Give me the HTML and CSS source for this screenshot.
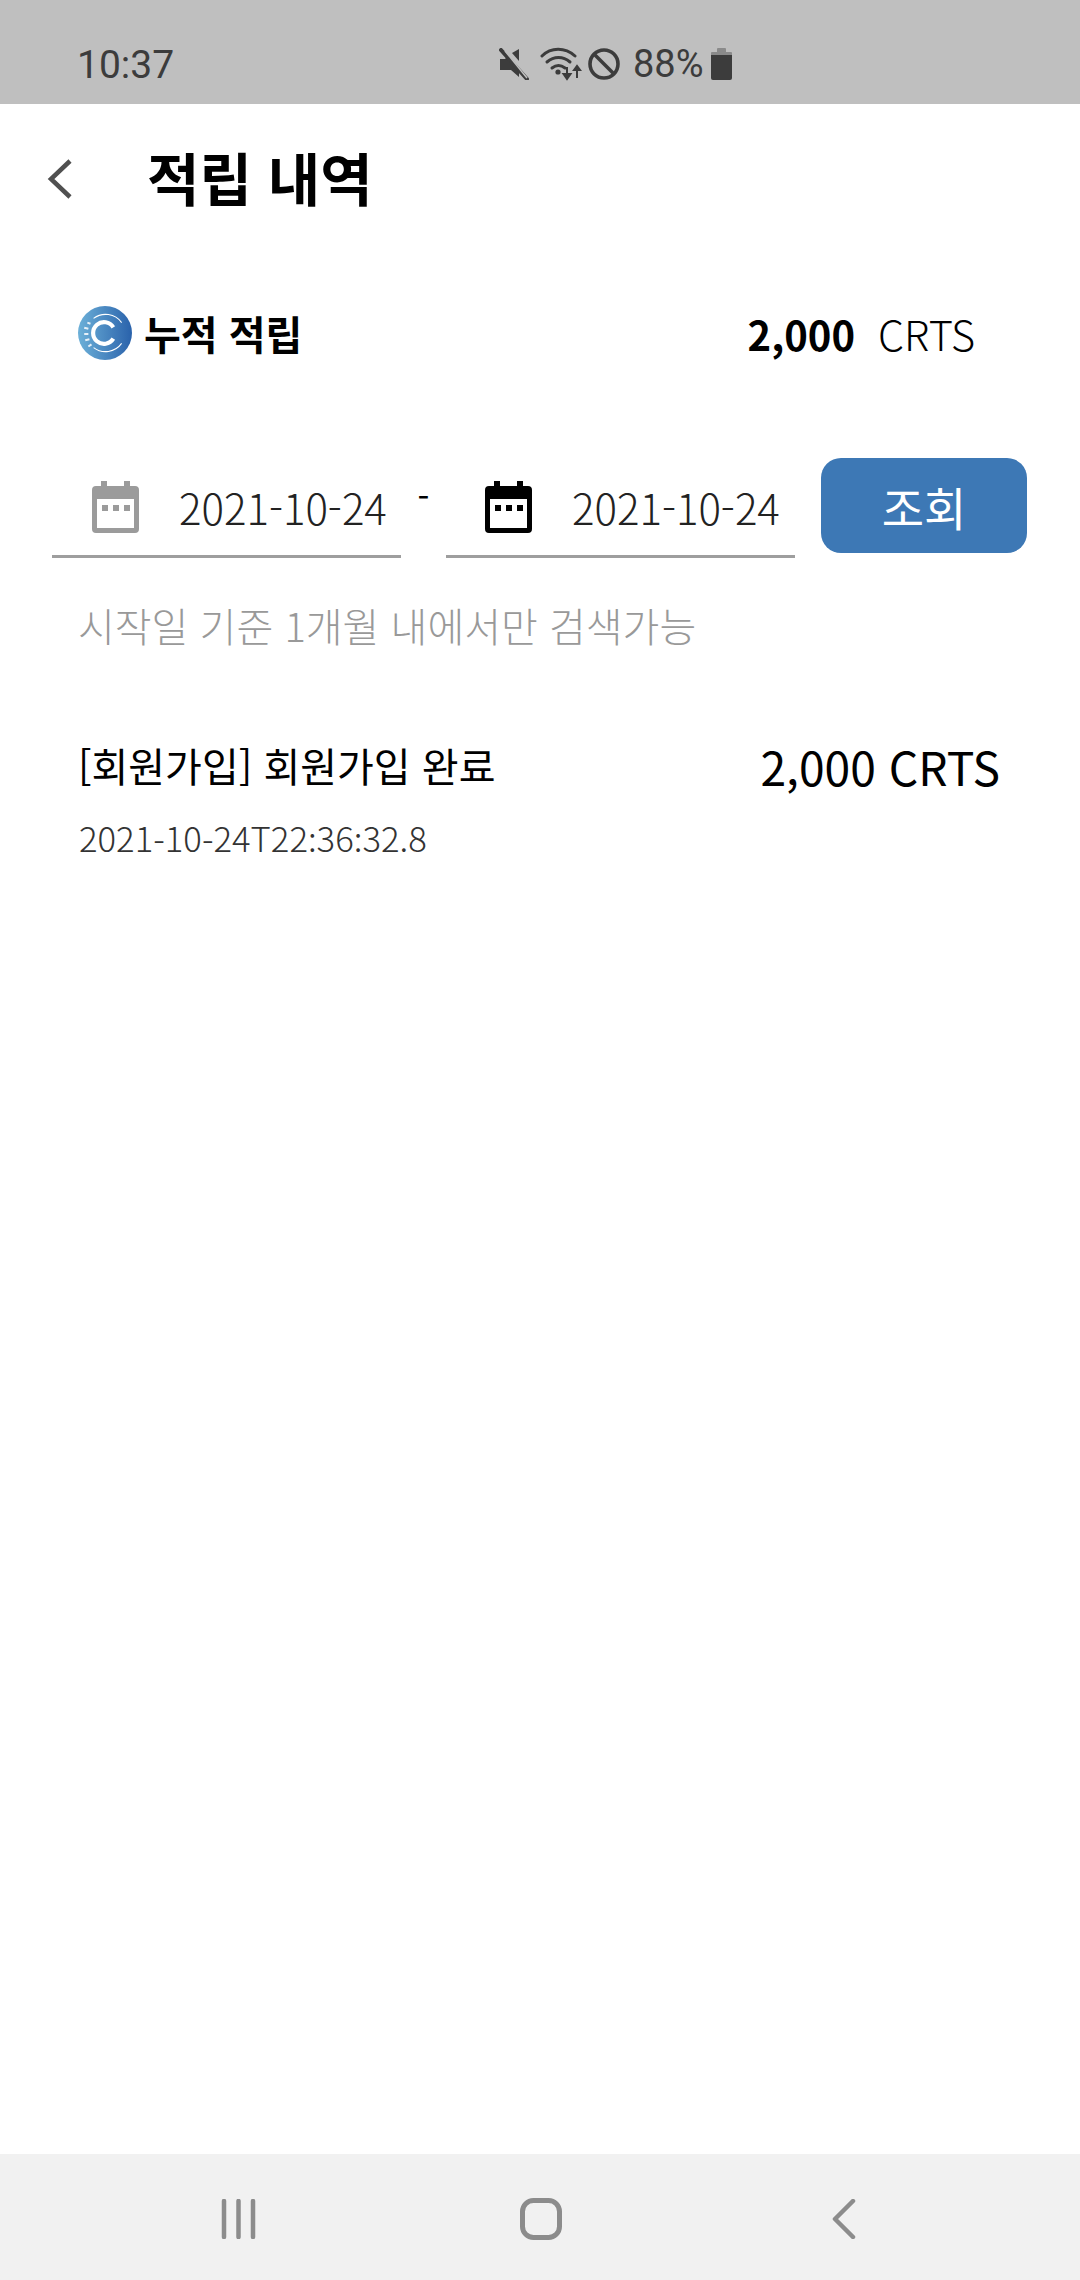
FILE: index.html
```html
<!DOCTYPE html>
<html lang="ko">
<head>
<meta charset="utf-8">
<title>적립 내역</title>
<link rel="stylesheet" href="styles.css">
</head>
<body>
<div class="screen">
  <div class="statusbar">
    <span class="clock">10:37</span>
    <div class="status-icons">
      <svg class="ic-mute" viewBox="0 0 30 32"><path d="M1 11h5l2-2 12 14v6l-8-7H1z" fill="#3c3c3c"/><path d="M20 1v12l-7-8z" fill="#3c3c3c"/><path d="M2 2l26 29" stroke="#3c3c3c" stroke-width="4" stroke-linecap="round" fill="none"/><path d="M6 3l22 27" stroke="#bfbfbf" stroke-width="1.5" fill="none"/></svg>
      <svg class="ic-wifi" viewBox="0 0 42 34"><g fill="none" stroke="#3c3c3c" stroke-width="3" stroke-linecap="round"><path d="M2 9C11 0 25 0 35 9"/><path d="M7 15c7-6 16-6 23 0"/><path d="M12 21c4-3 9-3 13 0"/></g><circle cx="18" cy="25" r="2.6" fill="#3c3c3c"/><path d="M27 20v10M23.500 27l3.500 5 3.500-5z" stroke="#3c3c3c" stroke-width="2" fill="#3c3c3c"/><path d="M37 31V21M34 23l3-4 3 4z" stroke="#3c3c3c" stroke-width="2" fill="#3c3c3c"/></svg>
      <svg class="ic-block" viewBox="0 0 32 32"><circle cx="16" cy="16" r="14" fill="none" stroke="#3c3c3c" stroke-width="3.600"/><path d="M6 6l20 20" stroke="#3c3c3c" stroke-width="3.600"/></svg>
      <span class="battery-pct">88%</span>
      <svg class="ic-batt" viewBox="0 0 21 32"><rect x="6" y="0" width="9" height="5" rx="1" fill="#8a8a8a"/><rect x="0" y="4" width="21" height="5" rx="1" fill="#8a8a8a"/><path d="M0 7h21v23a2 2 0 0 1-2 2H2a2 2 0 0 1-2-2z" fill="#3c3c3c"/></svg>
    </div>
  </div>

  <main class="content">
    <header class="appbar">
      <svg class="ic-back" viewBox="0 0 30 42"><path d="M25 3L6 21l19 18" fill="none" stroke="#505050" stroke-width="4.500"/></svg>
      <h1 class="title">적립 내역</h1>
    </header>

    <section class="summary">
      <div class="summary-label">
        <svg class="logo" viewBox="0 0 52 52">
          <defs><linearGradient id="lg" x1="0" y1="0" x2="1" y2="0"><stop offset="0" stop-color="#6cb0d8"/><stop offset="1" stop-color="#2a62ab"/></linearGradient></defs>
          <circle cx="26" cy="26" r="26" fill="url(#lg)"/>
          <path d="M34 20.500a10.500 10.500 0 1 0 0 11" fill="none" stroke="#fff" stroke-width="4"/>
          <path d="M15 12a19 19 0 0 1 27 4M42 36a19 19 0 0 1-27 4" fill="none" stroke="#fff" stroke-width="1"/>
          <path d="M12 17l-3-1M10 22l-4-1M10 27l-4 0M11 32l-4 1M13 37l-3 2" stroke="#fff" stroke-width="2" opacity=".85"/>
        </svg>
        <span class="summary-text">누적 적립</span>
      </div>
      <div class="summary-value"><b class="value-num">2,000</b><span class="value-unit">CRTS</span></div>
    </section>

    <section class="filter">
      <div class="date-field">
        <svg class="ic-cal ic-cal-grey" viewBox="0 0 47 52"><path d="M9 0h6v5h17V0h6v5h5a4 4 0 0 1 4 4v39a4 4 0 0 1-4 4H4a4 4 0 0 1-4-4V9a4 4 0 0 1 4-4h5zM5 18v29h37V18zM10 24h6v6h-6zM21 24h6v6h-6zM32 24h6v6h-6z" fill-rule="evenodd"/></svg>
        <span class="date-text">2021-10-24</span>
      </div>
      <span class="dash">-</span>
      <div class="date-field date-field-end">
        <svg class="ic-cal ic-cal-black" viewBox="0 0 47 52"><path d="M9 0h6v5h17V0h6v5h5a4 4 0 0 1 4 4v39a4 4 0 0 1-4 4H4a4 4 0 0 1-4-4V9a4 4 0 0 1 4-4h5zM5 18v29h37V18zM10 24h6v6h-6zM21 24h6v6h-6zM32 24h6v6h-6z" fill-rule="evenodd"/></svg>
        <span class="date-text">2021-10-24</span>
      </div>
      <button class="search-btn">조회</button>
    </section>

    <p class="hint">시작일 기준 1개월 내에서만 검색가능</p>

    <section class="entry">
      <div class="entry-main">
        <span class="entry-title">[회원가입] 회원가입 완료</span>
        <span class="entry-amount">2,000 CRTS</span>
      </div>
      <div class="entry-date">2021-10-24T22:36:32.8</div>
    </section>
  </main>

  <nav class="navbar">
    <svg class="ic-recents" viewBox="0 0 37 40"><path d="M4 2v36M18.500 2v36M33 2v36" stroke="#8c8c8c" stroke-width="4.500" stroke-linecap="round"/></svg>
    <svg class="ic-home" viewBox="0 0 42 42"><rect x="2.500" y="2.500" width="37" height="37" rx="11" fill="none" stroke="#8c8c8c" stroke-width="5"/></svg>
    <svg class="ic-navback" viewBox="0 0 24 40"><path d="M21 2L3 20l18 18" fill="none" stroke="#8c8c8c" stroke-width="4.500" stroke-linecap="round" stroke-linejoin="round"/></svg>
  </nav>
</div>
</body>
</html>
```
FILE: styles.css
```css
* { box-sizing: border-box; }
html, body { margin: 0; padding: 0; background: #fff; }
.screen {
  width: 1080px;
  height: 2280px;
  display: flex;
  flex-direction: column;
  font-family: "Noto Sans CJK KR", "Noto Sans", sans-serif;
  color: #000;
  overflow: hidden;
}
.statusbar {
  height: 104px;
  flex: none;
  background: #bfbfbf;
  display: flex;
  align-items: center;
  padding: 25px 0 0 77px;
  color: #3c3c3c;
  font-family: Roboto, sans-serif;
}
.clock { font-size: 39px; line-height: 44px; width: 422px; }
.status-icons { display: flex; align-items: center; height: 44px; margin-top: -2px; }
.ic-mute { width: 30px; height: 32px; }
.ic-wifi { width: 42px; height: 34px; margin-left: 11px; }
.ic-block { width: 32px; height: 32px; margin-left: 6px; }
.battery-pct { font-size: 38px; line-height: 44px; margin-left: 13px; width: 77px; }
.ic-batt { width: 21px; height: 32px; margin-left: 1px; }

.content { flex: 1; display: flex; flex-direction: column; }
.appbar { height: 152px; display: flex; align-items: center; padding-left: 45px; flex: none; }
.ic-back { width: 30px; height: 42px; margin-top: -2px; }
.title { margin: -8px 0 0 72px; font-size: 57px; font-weight: 700; line-height: 80px; }

.summary {
  display: flex;
  justify-content: space-between;
  align-items: center;
  height: 54px;
  margin-top: 50px;
  padding: 0 105px 0 78px;
}
.summary-label { display: flex; align-items: center; }
.logo { width: 54px; height: 54px; }
.summary-text { font-size: 40px; font-weight: 700; margin-left: 12px; line-height: 54px; }
.summary-value { display: flex; align-items: baseline; font-size: 40px; line-height: 54px; }
.value-num { font-weight: 700; }
.value-unit { font-weight: 300; margin-left: 23px; font-size: 41.500px; }

.filter { display: flex; align-items: flex-start; margin-top: 98px; padding-left: 52px; }
.date-field {
  width: 349px;
  height: 100px;
  border-bottom: 3px solid #9e9e9e;
  display: flex;
  align-items: center;
  padding-left: 40px;
  flex: none;
}
.date-field-end { padding-left: 39px; }
.ic-cal { width: 47px; height: 52px; flex: none; }
.ic-cal-grey { fill: #9b9b9b; }
.ic-cal-black { fill: #000; }
.date-text { font-size: 42px; margin-left: 40px; color: #222; font-weight: 300; line-height: 56px; white-space: nowrap; }
.dash { width: 45px; flex: none; text-align: center; font-size: 34px; line-height: 76px; }
.search-btn {
  width: 206px;
  height: 95px;
  margin-left: 26px;
  border: 0;
  border-radius: 20px;
  background: #3d78b5;
  color: #fff;
  font: 400 46px/1 "Noto Sans CJK KR", sans-serif;
  flex: none;
}

.hint { margin: 38px 0 0 78px; font-size: 40px; line-height: 58px; color: #999; font-weight: 300; }

.entry { margin-top: 77px; padding: 0 0 0 79px; }
.entry-main { display: flex; justify-content: space-between; align-items: center; padding-right: 80px; height: 70px; }
.entry-title { font-size: 40px; line-height: 56px; margin-top: -3px; margin-left: -1px; }
.entry-amount { font-size: 46.200px; line-height: 70px; }
.entry-date {
  font-size: 34.700px;
  font-weight: 300;
  color: #333;
  margin-top: 11px;
  line-height: 50px;
  font-feature-settings: "palt" 0, "locl" 0, "ccmp" 0;
}

.navbar {
  height: 126px;
  flex: none;
  background: #f1f1f1;
  display: flex;
  align-items: center;
  padding: 4px 0 0 220px;
}
.ic-recents { width: 37px; height: 40px; }
.ic-home { width: 42px; height: 42px; margin-left: 263px; }
.ic-navback { width: 24px; height: 40px; margin-left: 270px; }
```
